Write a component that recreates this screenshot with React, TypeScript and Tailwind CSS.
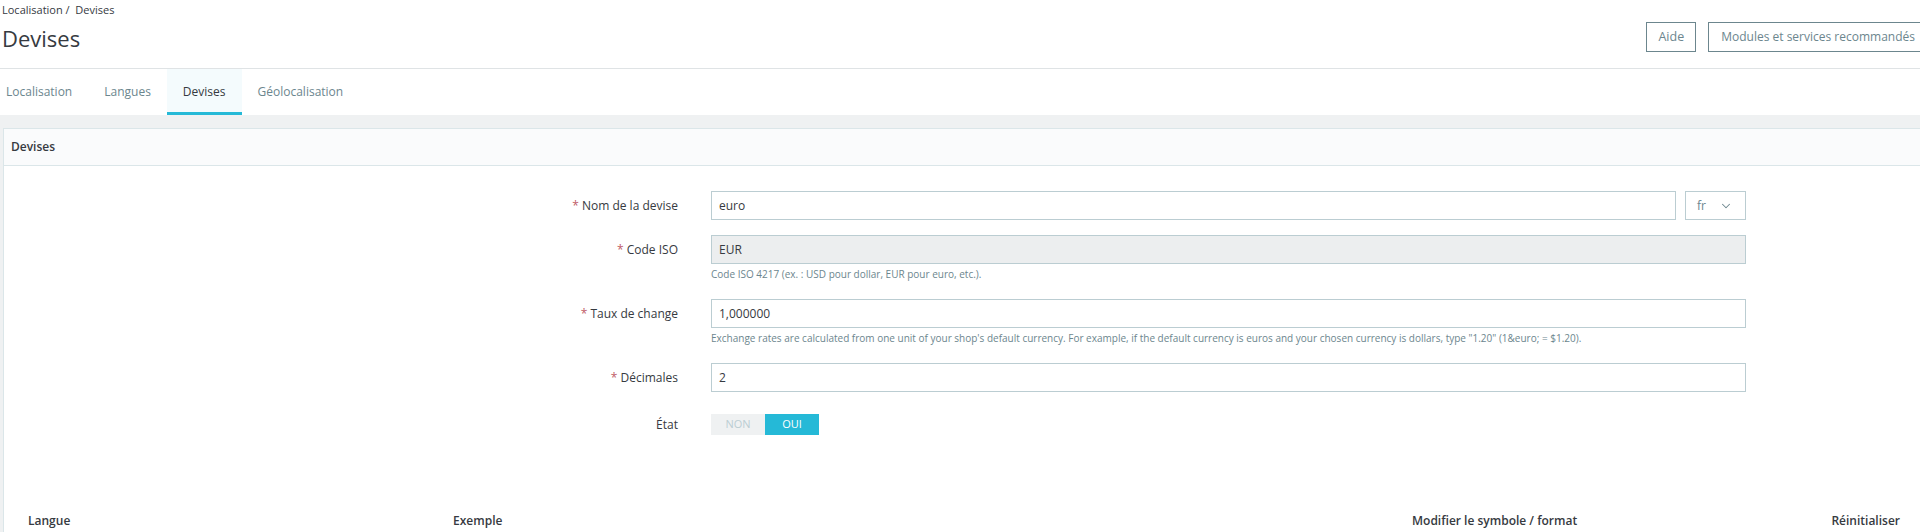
import { ChevronDown } from "lucide-react";

const tabs = ["Localisation", "Langues", "Devises", "Géolocalisation"];

function Label({ text, required = true }: { text: string; required?: boolean }) {
  return (
    <div className="w-[674px] shrink-0 h-[29px] leading-[29px] text-right text-[12px] text-[#363a41]">
      {required && <span className="text-[#c05c67]">* </span>}
      {text}
    </div>
  );
}

function Help({ children }: { children: React.ReactNode }) {
  return <p className="mt-[3px] text-[10px] leading-[14px] text-[#6c868e]">{children}</p>;
}

export default function App() {
  return (
    <div className="w-[1920px] h-[532px] overflow-hidden bg-white font-['Open_Sans',sans-serif] text-[#363a41]">
      {/* page header */}
      <header className="h-[69px] border-b border-[#dfe3e5] flex justify-between pl-[2px]">
        <div>
          <div className="pt-[3px] text-[11px] leading-[14px]">Localisation /&nbsp; Devises</div>
          <h1 className="mt-[6px] text-[22px] leading-[30px]">Devises</h1>
        </div>
        <div className="flex items-start gap-[12px] pt-[22px] -mr-[8px]">
          <button className="h-[30px] px-[11px] border border-[#6c868e] text-[12.5px] text-[#6c868e]">
            Aide
          </button>
          <button className="h-[30px] px-[12px] border border-[#6c868e] text-[12px] text-[#6c868e] whitespace-nowrap">
            Modules et services recommandés
          </button>
        </div>
      </header>

      {/* tabs */}
      <nav className="h-[46px] flex -ml-[10px]">
        {tabs.map((t) => (
          <div
            key={t}
            className={
              t === "Devises"
                ? "px-[16px] h-full flex items-center text-[12px] text-[#363a41] bg-[#f4fbfd] border-b-[3px] border-[#25b9d7] pt-[3px]"
                : "px-[16px] h-full flex items-center text-[12px] text-[#6c868e]"
            }
          >
            {t}
          </div>
        ))}
      </nav>

      {/* content */}
      <main className="bg-[#eff1f2] pt-[13px] pl-[3px] h-full">
        <section className="bg-white border border-r-0 border-[#dbe6e9] h-full">
          <div className="h-[37px] bg-[#fafbfc] border-b border-[#dbe6e9] pl-[7px] flex items-center text-[12px] font-semibold">
            Devises
          </div>

          <div className="pt-[25px]">
            {/* Nom de la devise */}
            <div className="flex gap-[33px] mb-[15px]">
              <Label text="Nom de la devise" />
              <div className="flex gap-[9px]">
                <div className="w-[965px] h-[29px] border border-[#bbcdd2] px-[7px] flex items-center text-[12px]">euro</div>
                <div className="w-[61px] h-[29px] border border-[#bbcdd2] pl-[11px] pr-[12px] flex items-center justify-between text-[12px] text-[#6c868e]">
                  fr
                  <ChevronDown size={14} strokeWidth={1.75} />
                </div>
              </div>
            </div>

            {/* Code ISO */}
            <div className="flex gap-[33px] mb-[18px]">
              <Label text="Code ISO" />
              <div>
                <div className="w-[1035px] h-[29px] border border-[#bbcdd2] bg-[#eceeef] px-[7px] flex items-center text-[12px]">EUR</div>
                <Help>Code ISO 4217 (ex. : USD pour dollar, EUR pour euro, etc.).</Help>
              </div>
            </div>

            {/* Taux de change */}
            <div className="flex gap-[33px] mb-[18px]">
              <Label text="Taux de change" />
              <div>
                <div className="w-[1035px] h-[29px] border border-[#bbcdd2] px-[7px] flex items-center text-[12px]">1,000000</div>
                <Help>
                  Exchange rates are calculated from one unit of your shop's default currency. For example, if the default currency is euros and your chosen currency is dollars, type "1.20" (1&amp;euro; = $1.20).
                </Help>
              </div>
            </div>

            {/* Décimales */}
            <div className="flex gap-[33px] mb-[18px]">
              <Label text="Décimales" />
              <div className="w-[1035px] h-[29px] border border-[#bbcdd2] px-[7px] flex items-center text-[12px]">2</div>
            </div>

            {/* État */}
            <div className="flex items-center gap-[33px]">
              <Label text="État" required={false} />
              <div className="flex h-[21px] text-[11px]">
                <div className="w-[54px] bg-[#eff1f2] text-[#bbcdd2] flex items-center justify-center">NON</div>
                <div className="w-[54px] bg-[#25b9d7] text-white flex items-center justify-center">OUI</div>
              </div>
            </div>

            {/* table header */}
            <div className="mt-[73px] flex pl-[24px] pr-[20px] text-[12px] font-semibold">
              <div className="w-[425px]">Langue</div>
              <div className="w-[959px]">Exemple</div>
              <div className="flex-1">Modifier le symbole / format</div>
              <div>Réinitialiser</div>
            </div>
          </div>
        </section>
      </main>
    </div>
  );
}
